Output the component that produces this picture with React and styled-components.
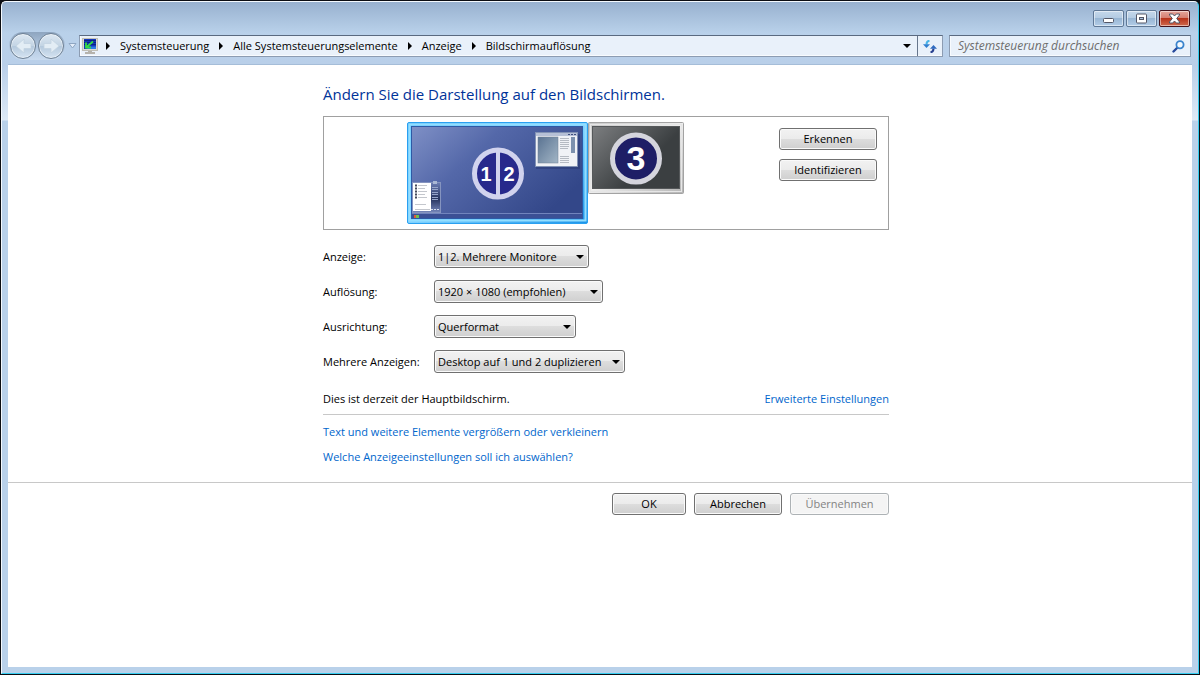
import React, { useState } from "react";
import styled, { createGlobalStyle } from "styled-components";

const CRUMBS = [
  "Systemsteuerung",
  "Alle Systemsteuerungselemente",
  "Anzeige",
  "Bildschirmauflösung",
];

const FIELDS = [
  {
    id: "display",
    label: "Anzeige:",
    width: 155,
    options: ["1|2. Mehrere Monitore", "3. Monitor"],
  },
  {
    id: "resolution",
    label: "Auflösung:",
    width: 169,
    options: ["1920 × 1080 (empfohlen)", "1280 × 720"],
  },
  {
    id: "orientation",
    label: "Ausrichtung:",
    width: 142,
    options: ["Querformat", "Hochformat"],
  },
  {
    id: "multiple",
    label: "Mehrere Anzeigen:",
    width: 191,
    options: ["Desktop auf 1 und 2 duplizieren", "Diese Anzeigen erweitern"],
  },
];

const App = () => {
  const [search, setSearch] = useState("");

  return (
    <Desktop>
      <GlobalStyle />
      <Window>
        <TitleBar>
          <CaptionButton type="button" aria-label="Minimieren">
            <MinimizeIcon />
          </CaptionButton>
          <CaptionButton type="button" aria-label="Maximieren">
            <MaximizeIcon />
          </CaptionButton>
          <CaptionButton type="button" aria-label="Schließen" $close>
            <CloseIcon />
          </CaptionButton>
        </TitleBar>
        <NavBar>
          <NavButtons>
            <NavButton type="button" aria-label="Zurück">
              <NavArrow />
            </NavButton>
            <NavButton type="button" aria-label="Vorwärts">
              <NavArrow forward />
            </NavButton>
          </NavButtons>
          <HistoryButton type="button" aria-label="Letzte Seiten">
            <svg width="9" height="6" viewBox="0 0 9 6">
              <path d="M1 .5h7L4.500 5z" fill="#e4eef9" stroke="#8fa6c2" />
            </svg>
          </HistoryButton>
          <AddressBar>
            <MonitorIcon />
            <Crumbs>
              {CRUMBS.map((crumb) => (
                <React.Fragment key={crumb}>
                  <CrumbArrow />
                  <Crumb type="button">{crumb}</Crumb>
                </React.Fragment>
              ))}
            </Crumbs>
            <AddressButton type="button" aria-label="Vorherige Orte">
              <DownArrow />
            </AddressButton>
            <AddressButton type="button" aria-label="Aktualisieren" $divided>
              <RefreshIcon />
            </AddressButton>
          </AddressBar>
          <SearchBox>
            <input
              aria-label="Systemsteuerung durchsuchen"
              placeholder="Systemsteuerung durchsuchen"
              value={search}
              onChange={(e) => setSearch(e.target.value)}
            />
            <SearchIcon />
          </SearchBox>
        </NavBar>
        <Content>
          <Column as="main">
            <Heading>Ändern Sie die Darstellung auf den Bildschirmen.</Heading>
            <Preview>
              <Stage>
                <MainMonitor />
                <SecondMonitor />
              </Stage>
              <PreviewActions>
                <Button type="button">Erkennen</Button>
                <Button type="button">Identifizieren</Button>
              </PreviewActions>
            </Preview>
            <Fields>
              {FIELDS.map((field) => (
                <Field key={field.id}>
                  <label htmlFor={field.id}>{field.label}</label>
                  <SelectWrapper $width={field.width}>
                    <select id={field.id}>
                      {field.options.map((option) => (
                        <option key={option}>{option}</option>
                      ))}
                    </select>
                    <DownArrow />
                  </SelectWrapper>
                </Field>
              ))}
            </Fields>
            <Status>
              <span>Dies ist derzeit der Hauptbildschirm.</span>
              <Link href="#advanced">Erweiterte Einstellungen</Link>
            </Status>
            <Links>
              <Link href="#textsize">
                Text und weitere Elemente vergrößern oder verkleinern
              </Link>
              <Link href="#help">
                Welche Anzeigeeinstellungen soll ich auswählen?
              </Link>
            </Links>
          </Column>
          <Footer>
            <Column>
              <FooterActions>
                <Button type="button" $width={74}>
                  OK
                </Button>
                <Button type="button" $width={88}>
                  Abbrechen
                </Button>
                <Button type="button" $width={99} disabled>
                  Übernehmen
                </Button>
              </FooterActions>
            </Column>
          </Footer>
        </Content>
      </Window>
    </Desktop>
  );
};

const MinimizeIcon = () => (
  <svg width="13" height="11" viewBox="0 0 13 11">
    <rect x="1.500" y="5.500" width="10" height="4" rx="1" fill="#fff" stroke="#535666" />
  </svg>
);

const MaximizeIcon = () => (
  <svg width="13" height="11" viewBox="0 0 13 11">
    <path
      d="M2.500 1h8a1 1 0 0 1 1 1v7a1 1 0 0 1-1 1h-8a1 1 0 0 1-1-1V2a1 1 0 0 1 1-1z"
      fill="#fff"
      stroke="#535666"
    />
    <rect x="4.500" y="4.500" width="4" height="2" fill="#a9c3de" stroke="#535666" />
  </svg>
);

const CloseIcon = () => (
  <svg width="13" height="11" viewBox="0 0 13 11">
    <path
      d="M1.500 1h3.200l1.800 2 1.800-2h3.200v1L8.700 5.500l2.800 3.500v1H8.300L6.500 8 4.700 10H1.500V9l2.800-3.500L1.500 2z"
      fill="#fff"
      stroke="#535666"
    />
  </svg>
);

const NavArrow = ({ forward }) => (
  <svg width="17" height="16" viewBox="0 0 17 16">
    <path
      d={
        forward
          ? "M8 1l8 7-8 7v-4.500H1v-5h7z"
          : "M9 1L1 8l8 7v-4.500h7v-5H9z"
      }
      fill="#e3edf5"
      stroke="#c3d3e1"
      strokeWidth="0.800"
      strokeLinejoin="round"
    />
  </svg>
);

const MonitorIcon = () => (
  <svg width="16" height="16" viewBox="0 0 16 16">
    <rect x="0.500" y="0.500" width="15" height="12" fill="#dcdad2" stroke="#c0beb5" />
    <rect x="2" y="1" width="12" height="10" fill="#1238b8" />
    <path d="M2 2.500h12M2 4.500h12M2 6.500h12" stroke="#0c1f84" />
    <path d="M8 8.500h6v2.500H4z" fill="#2c7be8" />
    <path d="M4 4.500v5h5M4.500 9l6.500-5.500" fill="none" stroke="#35dc45" strokeWidth="1.800" />
    <path d="M6 13h4v1h3v2H3v-2h3z" fill="#b5b3ad" />
  </svg>
);

const CrumbArrow = () => (
  <svg width="4" height="8" viewBox="0 0 4 8">
    <path d="M0 0l4 4-4 4z" fill="#000" />
  </svg>
);

const DownArrow = () => (
  <svg width="8" height="4" viewBox="0 0 8 4">
    <path d="M0 0h8L4 4z" fill="#000" />
  </svg>
);

const RefreshIcon = () => (
  <svg width="14" height="13" viewBox="0 0 14 13">
    <path
      d="M6.500.8C4.300 1 3.500 2.300 3.500 4.500"
      fill="none"
      stroke="#49b4e6"
      strokeWidth="2"
    />
    <path d="M0 4.200h7L3.500 8z" fill="#2f7fd0" />
    <path
      d="M7.500 12.200c2.200-.2 3-1.500 3-3.700"
      fill="none"
      stroke="#27408f"
      strokeWidth="2"
    />
    <path d="M7 8.800h7L10.500 5z" fill="#2f6bc0" />
  </svg>
);

const SearchIcon = () => (
  <svg width="13" height="13" viewBox="0 0 13 13">
    <path d="M5 8L1.500 11.500" stroke="#274a9c" strokeWidth="2.400" strokeLinecap="round" />
    <circle cx="8" cy="4.800" r="3.600" fill="#f3f9fe" stroke="#3a83cc" strokeWidth="1.800" />
  </svg>
);

const MainMonitor = () => (
  <svg width="181" height="102" viewBox="0 0 181 102">
    <defs>
      <linearGradient id="main-frame" x1="0" y1="0" x2="1" y2="1">
        <stop offset="0" stopColor="#5cc0fa" />
        <stop offset="0.500" stopColor="#7fd2ff" />
        <stop offset="1" stopColor="#1c94e8" />
      </linearGradient>
      <linearGradient id="main-screen" x1="0" y1="0" x2="1" y2="0.600">
        <stop offset="0" stopColor="#7f90c6" />
        <stop offset="0.400" stopColor="#5468a9" />
        <stop offset="1" stopColor="#334789" />
      </linearGradient>
      <linearGradient id="page-image" x1="0" y1="0" x2="1" y2="1">
        <stop offset="0" stopColor="#5a7392" />
        <stop offset="1" stopColor="#a3b6c6" />
      </linearGradient>
      <linearGradient id="gadget" x1="0" y1="0" x2="0" y2="1">
        <stop offset="0" stopColor="#6c7db4" />
        <stop offset="0.550" stopColor="#27345f" />
        <stop offset="1" stopColor="#7687bb" />
      </linearGradient>
    </defs>
    <rect x="0.500" y="0.500" width="180" height="101" rx="1.500" fill="url(#main-frame)" stroke="#2aa0f0" />
    <rect x="2.500" y="2.500" width="176" height="96" fill="none" stroke="#93deff" strokeWidth="2" />
    <rect x="4.500" y="4.500" width="171" height="92" fill="url(#main-screen)" stroke="#2d5aa6" />
    <path d="M5 91.500h170" stroke="#7184bd" />
    <rect x="5" y="92" width="170" height="4" fill="#3b5095" />
    <rect x="7" y="93" width="2" height="3" fill="#e0583c" />
    <rect x="9" y="93" width="3" height="3" fill="#6fc04c" />

    <rect x="129" y="12" width="44" height="35" fill="#25366c" opacity="0.450" />
    <rect x="128.500" y="10.500" width="42" height="34" fill="#f0f2f6" stroke="#8292b4" />
    <rect x="129" y="11" width="41" height="3" fill="#b6c0d6" />
    <path d="M161 12.500h2M164 12.500h2M167 12.500h2" stroke="#3e4e7e" />
    <rect x="131" y="15" width="20" height="26" fill="url(#page-image)" stroke="#6b7d92" strokeWidth="0.500" />
    <path
      d="M153 16.500h9M153 18.500h9M153 20.500h9M153 22.500h9M153 24.500h9M153 26.500h8M153 34.500h9M153 36.500h9M153 38.500h9M153 40.500h9"
      stroke="#b5bac2"
    />
    <rect x="164" y="15" width="4" height="16" fill="#7c91ae" />

    <rect x="5.500" y="60.500" width="28" height="30" fill="url(#gadget)" stroke="#8594bf" />
    <rect x="26" y="59" width="4" height="3" fill="#aab7d4" />
    <rect x="6" y="61" width="18" height="28" fill="#fff" />
    <path
      d="M11 63.500h9M11 66.500h7M11 69.500h9M11 72.500h7M11 75.500h9M8 82.500h11M8 87.500h15"
      stroke="#c4c7cd"
    />
    <path d="M8 63.500h2M8 66.500h2M8 69.500h2M8 72.500h2M8 75.500h2" stroke="#454a5a" strokeWidth="2" />
    <path d="M25 65.500h6M25 67.500h6M25 70.500h6M25 72.500h6M25 75.500h6M25 77.500h6" stroke="#96a4cb" />
    <path d="M24 87.500h8" stroke="#d6deef" strokeDasharray="2 1" />

    <circle cx="91" cy="51.500" r="23.500" fill="#27298c" stroke="#d1d3ee" strokeWidth="5" />
    <rect x="89" y="29" width="4" height="46" fill="#d1d3ee" />
    <MonitorNumber x="79" y="59" fontSize="20">
      1
    </MonitorNumber>
    <MonitorNumber x="102" y="59" fontSize="20">
      2
    </MonitorNumber>
  </svg>
);

const SecondMonitor = () => (
  <svg width="96" height="72" viewBox="0 0 96 72">
    <defs>
      <linearGradient id="second-frame" x1="0" y1="0" x2="1" y2="1">
        <stop offset="0" stopColor="#c9c9c9" />
        <stop offset="0.500" stopColor="#ededed" />
        <stop offset="1" stopColor="#b5b5b5" />
      </linearGradient>
      <linearGradient id="second-screen" x1="0" y1="0" x2="0.700" y2="0.500">
        <stop offset="0" stopColor="#7c7e80" />
        <stop offset="1" stopColor="#3b3f41" />
      </linearGradient>
    </defs>
    <rect x="0.500" y="0.500" width="95" height="71" rx="1" fill="url(#second-frame)" stroke="#a3a3a3" />
    <rect x="2.500" y="2.500" width="91" height="67" fill="none" stroke="#e6e6e6" />
    <rect x="4.500" y="4.500" width="87" height="62" fill="url(#second-screen)" stroke="#55585a" />
    <circle cx="48" cy="36.500" r="23.500" fill="#1e1e66" stroke="#d5d5dd" strokeWidth="5" />
    <MonitorNumber x="48" y="48" fontSize="34">
      3
    </MonitorNumber>
  </svg>
);

const GlobalStyle = createGlobalStyle`
  * {
    box-sizing: border-box;
  }

  body {
    margin: 0;
    color: #000;
    font-family: "Open Sans", "Noto Sans", sans-serif;
    font-size: 11px;
    line-height: 16px;
  }

  button,
  input,
  select {
    margin: 0;
    color: inherit;
    font: inherit;
  }

  svg {
    display: block;
    flex: none;
  }
`;

const Desktop = styled.div`
  display: flex;
  min-height: 100vh;
  padding: 1px;
  background: #0b0d12;
`;

const Window = styled.div`
  display: flex;
  flex: 1;
  flex-direction: column;
  min-width: 0;
  padding: 0 6px 6px;
  border: 1px solid #f4f9fe;
  border-right-color: #35cdf0;
  border-bottom-color: #35cdf0;
  border-radius: 5px 5px 0 0;
  background: linear-gradient(
    #98b1cf 0,
    #b9d1ea 31px,
    #b9cfe9 63px,
    #dde9f6 118px,
    #b9d1ea 119px
  );
`;

const TitleBar = styled.div`
  display: flex;
  justify-content: flex-end;
  gap: 2px;
  height: 33px;
  padding: 8px 2px 0;
`;

const CaptionButton = styled.button`
  display: flex;
  align-items: center;
  justify-content: center;
  width: 31px;
  height: 17px;
  padding: 0;
  border: 1px solid ${({ $close }) => ($close ? "#43121b" : "#5f7896")};
  border-radius: 2px;
  background: ${({ $close }) =>
    $close
      ? "linear-gradient(#e5a69c, #d57b6d 50%, #b8331b 50%, #cf6a4e)"
      : "linear-gradient(#c5d8eb, #b2cae2 50%, #98b6d4 50%, #b3cde8)"};
  box-shadow: inset 0 0 0 1px rgba(255, 255, 255, 0.5);
`;

const NavBar = styled.div`
  display: flex;
  align-items: center;
  height: 22px;
  margin-bottom: 7px;
  padding-right: 1px;
`;

const NavButtons = styled.div`
  display: flex;
  gap: 2px;
  margin-left: 1px;
  padding: 1px;
  border-radius: 14px;
  background: linear-gradient(#8ea5bf, #b5cae2 60%, #c9dbef);
`;

const NavButton = styled.button`
  display: flex;
  align-items: center;
  justify-content: center;
  width: 26px;
  height: 26px;
  padding: 0;
  border: 1px solid #6e8195;
  border-radius: 50%;
  background: linear-gradient(#dde8f2, #c3d4e4 50%, #b4c8dc 50%, #d5e4f2);
  box-shadow: inset 0 0 0 1px rgba(255, 255, 255, 0.5);
`;

const HistoryButton = styled.button`
  display: flex;
  align-items: center;
  justify-content: center;
  width: 14px;
  height: 22px;
  padding: 0;
  border: none;
  background: none;
`;

const AddressBar = styled.div`
  display: flex;
  flex: 1;
  align-items: center;
  height: 22px;
  padding-left: 2px;
  border: 1px solid #8c9cb2;
  border-top-color: #5a6a80;
  background: #e9f1fa;
  box-shadow: inset 1px -1px 0 #f8fbfe;
`;

const Crumbs = styled.nav`
  display: flex;
  flex: 1;
  align-items: center;
  gap: 10px;
  margin-left: 8px;
`;

const Crumb = styled.button`
  padding: 0;
  border: none;
  background: none;
  white-space: nowrap;
`;

const AddressButton = styled.button`
  display: flex;
  align-items: center;
  justify-content: center;
  width: ${({ $divided }) => ($divided ? "25px" : "20px")};
  height: 20px;
  padding: 0;
  border: none;
  border-left: ${({ $divided }) => ($divided ? "1px solid #66768c" : "none")};
  background: none;
`;

const SearchBox = styled.div`
  display: flex;
  align-items: center;
  width: 242px;
  height: 22px;
  margin-left: 6px;
  padding: 0 5px 0 8px;
  border: 1px solid #8c9cb2;
  border-top-color: #5a6a80;
  background: #e9f1fa;
  box-shadow: inset 1px -1px 0 #f8fbfe;

  input {
    flex: 1;
    min-width: 0;
    padding: 0;
    border: none;
    outline: none;
    background: none;
    font-size: 12px;
    font-style: italic;
  }

  input::placeholder {
    color: #6d6d6d;
    opacity: 1;
  }
`;

const Content = styled.div`
  flex: 1;
  border-top: 1px solid #a5bdd8;
  background: #fff;
`;

const Column = styled.div`
  max-width: 578px;
  margin: 0 auto;
  padding-left: 12px;
`;

const Heading = styled.h1`
  margin: 0 0 12px;
  padding-top: 20px;
  color: #003399;
  font-size: 15px;
  font-weight: 400;
  line-height: 19px;
`;

const Preview = styled.section`
  display: flex;
  height: 114px;
  padding: 5px 11px 0 0;
  border: 1px solid #a0a0a0;
`;

const Stage = styled.div`
  display: flex;
  flex: 1;
  align-items: flex-start;
  justify-content: center;
`;

const MonitorNumber = styled.text`
  fill: #fff;
  font-family: "Liberation Sans", Arial, sans-serif;
  font-weight: 700;
  text-anchor: middle;
`;

const PreviewActions = styled.div`
  display: flex;
  flex-direction: column;
  gap: 9px;
  width: 98px;
  margin-left: 12px;
  padding-top: 6px;
`;

const Button = styled.button`
  width: ${({ $width }) => ($width ? `${$width}px` : "100%")};
  height: 22px;
  padding: 0;
  border: 1px solid #707070;
  border-radius: 3px;
  background: linear-gradient(#f2f2f2, #ebebeb 50%, #dddddd 50%, #cfcfcf);
  box-shadow: inset 0 0 0 1px #fafafa;

  &:disabled {
    border-color: #adb2b5;
    background: #f4f4f4;
    color: #838383;
  }
`;

const Fields = styled.form`
  display: flex;
  flex-direction: column;
  gap: 12px;
  margin-top: 15px;
`;

const Field = styled.div`
  display: flex;
  align-items: center;

  label {
    width: 111px;
  }
`;

const SelectWrapper = styled.div`
  position: relative;
  width: ${({ $width }) => $width}px;

  select {
    appearance: none;
    display: block;
    width: 100%;
    height: 23px;
    padding: 0 16px 0 3px;
    border: 1px solid #707070;
    border-radius: 3px;
    background: linear-gradient(#f2f2f2, #ebebeb 50%, #dddddd 50%, #cfcfcf);
    box-shadow: inset 0 0 0 1px #fafafa;
  }

  svg {
    position: absolute;
    top: 10px;
    right: 5px;
    pointer-events: none;
  }
`;

const Status = styled.div`
  display: flex;
  justify-content: space-between;
  margin-top: 18px;
  padding-bottom: 7px;
  border-bottom: 1px solid #c8c8c8;
`;

const Link = styled.a`
  color: #0066cc;
  text-decoration: none;

  &:hover {
    text-decoration: underline;
  }
`;

const Links = styled.div`
  display: flex;
  flex-direction: column;
  align-items: flex-start;
  gap: 9px;
  margin-top: 9px;
`;

const Footer = styled.footer`
  margin-top: 17px;
  padding-top: 10px;
  border-top: 1px solid #c8c8c8;
`;

const FooterActions = styled.div`
  display: flex;
  justify-content: flex-end;
  gap: 8px;
`;

export default App;
